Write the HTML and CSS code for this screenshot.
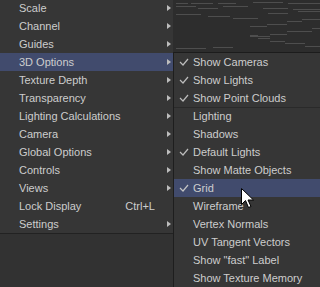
FILE: index.html
```
<!DOCTYPE html>
<html>
<head>
<meta charset="utf-8">
<link rel="stylesheet" href="styles.css">
</head>
<body>
<div class="screen">
  <div class="menu">
    <div class="item"><span class="label">Scale</span><span class="arrow"></span></div>
    <div class="item"><span class="label">Channel</span><span class="arrow"></span></div>
    <div class="item"><span class="label">Guides</span><span class="arrow"></span></div>
    <div class="item active"><span class="label">3D Options</span><span class="arrow"></span></div>
    <div class="item"><span class="label">Texture Depth</span><span class="arrow"></span></div>
    <div class="item"><span class="label">Transparency</span><span class="arrow"></span></div>
    <div class="item"><span class="label">Lighting Calculations</span><span class="arrow"></span></div>
    <div class="item"><span class="label">Camera</span><span class="arrow"></span></div>
    <div class="item"><span class="label">Global Options</span><span class="arrow"></span></div>
    <div class="item"><span class="label">Controls</span><span class="arrow"></span></div>
    <div class="item"><span class="label">Views</span><span class="arrow"></span></div>
    <div class="item"><span class="label">Lock Display</span><span class="shortcut">Ctrl+L</span></div>
    <div class="item"><span class="label">Settings</span><span class="arrow"></span></div>
  </div>
  <div class="side">
    <svg class="graph" width="147" height="52" viewBox="0 0 147 52">
      <g stroke="#4e4e4e" stroke-width="1" fill="none">
        <path d="M3 3.5h12M18 3.5h22M45 3.5h18M80 2.5h30M115 3.5h32"/>
        <path d="M3 6.5h20M25 8.5h20M50 6.5h25M90 8.5h25M120 9.5h27"/>
        <path d="M3 14.5h25M35 16.5h22M60 18.5h25M95 13.5h20M125 11.5h22"/>
        <path d="M77 26.5h17M94 24.5h20M114 21.5h15M129 19.5h18"/>
        <path d="M77 36.5h20M97 34.5h17M114 31.5h25M139 28.5h8"/>
        <path d="M77 35.5h8M85 38.5h12M97 41.5h15M112 43.5h20M132 46.5h15"/>
        <path d="M3 48.5h30M40 47.5h20"/>
      </g>
    </svg>
    <div class="submenu">
      <div class="sitem"><span class="check"><svg width="10" height="8" viewBox="0 0 10 8"><path d="M1 4l3 3 5-6" stroke="#bcbcbc" stroke-width="1.2" fill="none"/></svg></span>Show Cameras</div>
      <div class="sitem"><span class="check"><svg width="10" height="8" viewBox="0 0 10 8"><path d="M1 4l3 3 5-6" stroke="#bcbcbc" stroke-width="1.2" fill="none"/></svg></span>Show Lights</div>
      <div class="sitem"><span class="check"><svg width="10" height="8" viewBox="0 0 10 8"><path d="M1 4l3 3 5-6" stroke="#bcbcbc" stroke-width="1.2" fill="none"/></svg></span>Show Point Clouds</div>
      <div class="sitem sep"><span class="check"></span>Lighting</div>
      <div class="sitem"><span class="check"></span>Shadows</div>
      <div class="sitem"><span class="check"><svg width="10" height="8" viewBox="0 0 10 8"><path d="M1 4l3 3 5-6" stroke="#bcbcbc" stroke-width="1.2" fill="none"/></svg></span>Default Lights</div>
      <div class="sitem"><span class="check"></span>Show Matte Objects</div>
      <div class="sitem active"><span class="check"><svg width="10" height="8" viewBox="0 0 10 8"><path d="M1 4l3 3 5-6" stroke="#c4c4c4" stroke-width="1.2" fill="none"/></svg></span>Grid</div>
      <div class="sitem"><span class="check"></span>Wireframe</div>
      <div class="sitem"><span class="check"></span>Vertex Normals</div>
      <div class="sitem"><span class="check"></span>UV Tangent Vectors</div>
      <div class="sitem"><span class="check"></span>Show "fast" Label</div>
      <div class="sitem"><span class="check"></span>Show Texture Memory</div>
    </div>
  </div>
  <svg class="cursor" width="13" height="21" viewBox="0 0 13 21">
    <path d="M0.5 0.5v16l4-4 3 7 2.5-1-3-6.5h5.5z" fill="#fff" stroke="#000" stroke-width="1"/>
  </svg>
</div>
</body>
</html>
```
FILE: styles.css
```
html, body {
  margin: 0;
  padding: 0;
  background: #323232;
}
.screen {
  position: relative;
  width: 320px;
  height: 287px;
  overflow: hidden;
  display: flex;
  align-items: flex-start;
  font-family: "Liberation Sans", Arial, sans-serif;
  font-size: 11px;
  color: #cdcdcd;
}
.menu {
  width: 173px;
  margin-top: -1px;
  background: #363636;
  border-bottom: 1px solid #222;
  flex: none;
}
.item {
  height: 18px;
  display: flex;
  align-items: center;
  padding-left: 19px;
  padding-right: 2px;
}
.item.active {
  background: #414b6d;
}
.label {
  flex: 1;
}
.arrow {
  width: 0;
  height: 0;
  border-left: 4px solid #bdbdbd;
  border-top: 3.5px solid transparent;
  border-bottom: 3.5px solid transparent;
}
.shortcut {
  margin-right: 16px;
}
.side {
  flex: 1;
  display: flex;
  flex-direction: column;
  background: #2d2d2d;
}
.graph {
  display: block;
}
.submenu {
  background: #363636;
  border-top: 1px solid #1c1c1c;
  border-left: 1px solid #1e1e1e;
  height: 240px;
}
.sitem {
  height: 18px;
  display: flex;
  align-items: center;
}
.sitem.sep {
  box-shadow: inset 0 1px 0 #2a2a2a;
}
.sitem.active {
  background: #414b6d;
}
.check {
  width: 19px;
  display: flex;
  justify-content: flex-start;
  padding-left: 5px;
  box-sizing: border-box;
}
.cursor {
  position: absolute;
  left: 241px;
  top: 188px;
}
```
